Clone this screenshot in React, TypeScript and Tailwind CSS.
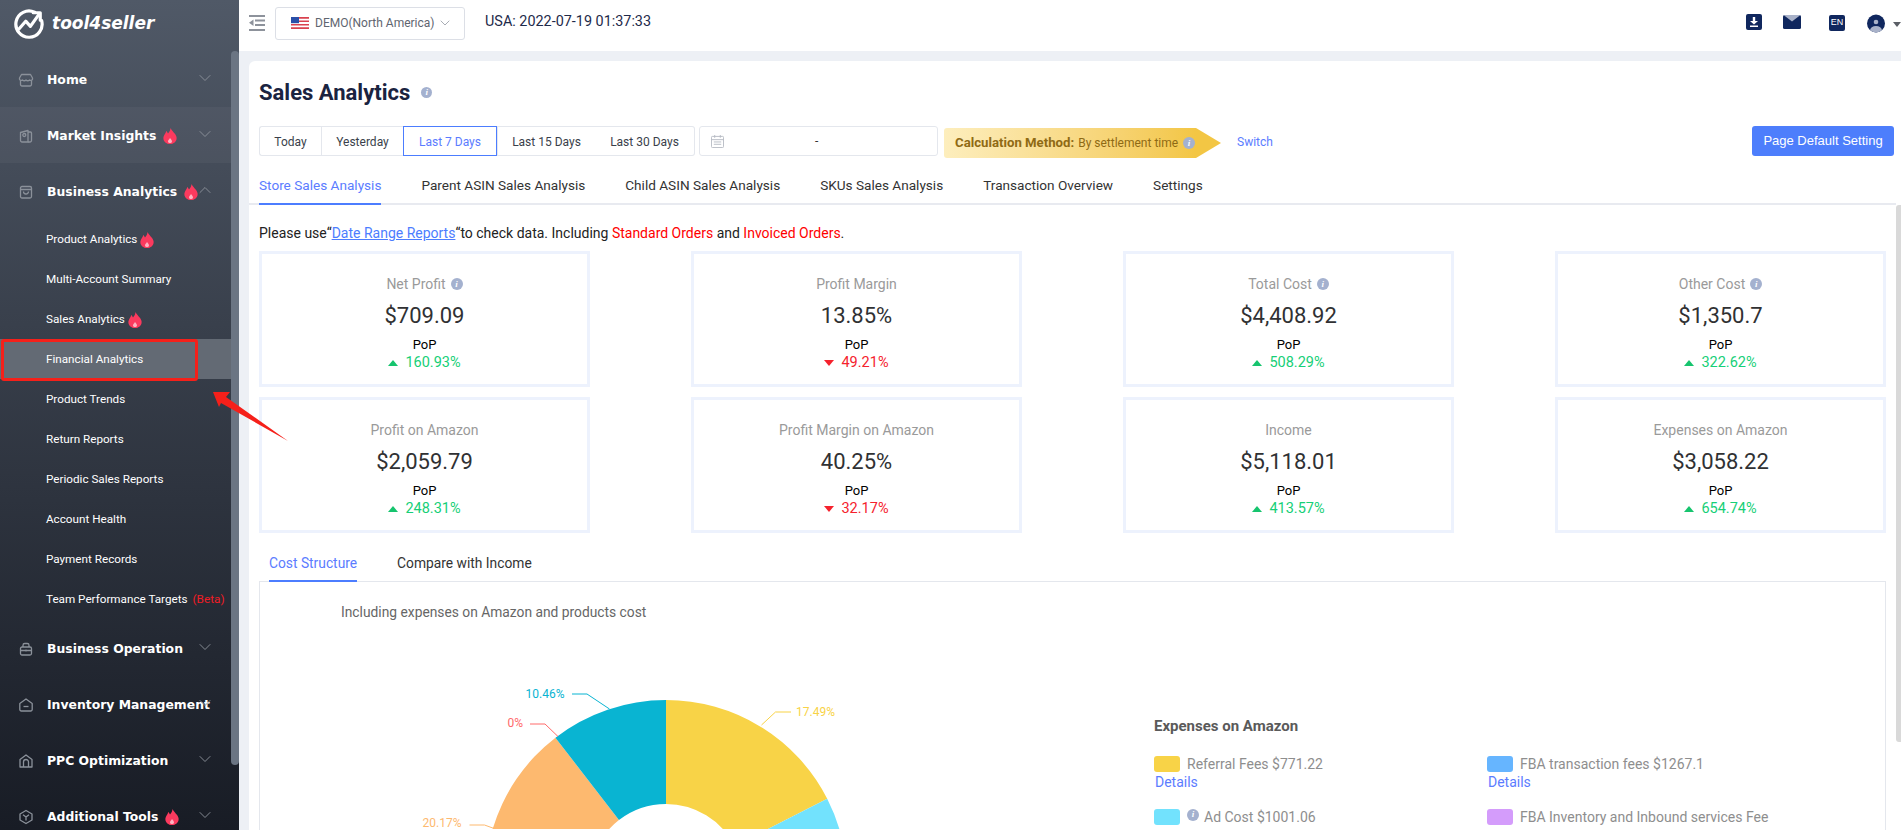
import React from "react";
import { ChevronDown, ChevronUp } from "lucide-react";

const Flame = ({ className = "" }: { className?: string }) => (
  <svg viewBox="0 0 14 16" className={`w-[14px] h-[16px] shrink-0 ${className}`}>
    <path d="M7.500 0C8.500 3 12.500 5 13.500 9C14.300 13 11 16 7 16C3 16 -.3 13 .5 9C1 6.800 2.800 5.500 3.200 3C4.400 4 5 5.500 5 5.500C6.400 4 7.400 2 7.500 0Z" fill="#fb3a5e" />
    <path d="M7 10C8 11.400 9.400 12.400 8.900 14C8.400 15.300 5.600 15.300 5.100 14C4.600 12.500 6 11.800 7 10Z" fill="#fdb4c2" />
  </svg>
);

const Info = ({ className = "" }: { className?: string }) => (
  <span className={`inline-flex items-center justify-center w-[12px] h-[12px] rounded-full bg-[#a4b1cf] text-white text-[9px] leading-none italic font-bold shrink-0 ${className}`} style={{ fontFamily: "'Liberation Serif', serif" }}>i</span>
);

const icons: Record<string, React.ReactNode> = {
  home: <><path d="M3.500 2.500h9l2 3.500v1.200a2 2 0 0 1-3 .8 2.400 2.400 0 0 1-3.500 0 2.400 2.400 0 0 1-3.500 0 2 2 0 0 1-3-.8V6z" /><path d="M2.500 8.500v4a1.500 1.500 0 0 0 1.500 1.500h8a1.500 1.500 0 0 0 1.500-1.500v-4" /></>,
  market: <><path d="M2.500 4.500 10 2.500v11.500H4a1.500 1.500 0 0 1-1.500-1.500z" /><path d="M10 4h2.500a1 1 0 0 1 1 1v7.500a1.500 1.500 0 0 1-1.500 1.500h-2" /><circle cx="6.300" cy="7" r="1.500" /></>,
  business: <><rect x="2.500" y="2.500" width="11" height="11.500" rx="1.500" /><path d="M2.500 5.500h11M5.500 7.500a2.500 2.500 0 0 0 5 0" /></>,
  operation: <><path d="M5 6V4.200A1.700 1.700 0 0 1 6.700 2.500h2.600A1.700 1.700 0 0 1 11 4.200V6" /><rect x="2.500" y="6" width="11" height="8" rx="1.500" /><path d="M2.500 9.500h11M8 8.500v2" /></>,
  inventory: <><path d="M1.800 6.500 8 2l6.200 4.500v6A1.500 1.500 0 0 1 12.700 14H3.300a1.500 1.500 0 0 1-1.500-1.500z" /><path d="M5.500 9.500h5" /></>,
  ppc: <><path d="M2 6.500 8 2l6 4.500V14H2z" /><path d="M5.500 14V9a2.500 2.500 0 0 1 5 0v5" /></>,
  tools: <><path d="M8 1.500 14 5v6l-6 3.500L2 11V5z" /><path d="M5 5.700l3 2.300 3-2.300M8 8v3.500" /></>,
};

const NavIcon = ({ name }: { name: string }) => (
  <svg viewBox="0 0 16 16" className="w-[16px] h-[16px] shrink-0 mr-[13px]" fill="none" stroke="#8b919a" strokeWidth="1.300" strokeLinejoin="round">
    {icons[name]}
  </svg>
);

const NavHead = ({ label, icon, flame, open, lit }: { label: string; icon: string; flame?: boolean; open?: boolean; lit?: boolean }) => (
  <div className={`relative h-[56px] flex items-center pl-[18px] pt-[2px] ${lit ? "bg-white/[0.04]" : ""}`}>
    <NavIcon name={icon} />
    <span className="text-white font-bold text-[12.400px] whitespace-nowrap" style={{ fontFamily: "'DejaVu Sans', sans-serif" }}>{label}</span>
    {flame && <Flame className="ml-[7px]" />}
    {open
      ? <ChevronUp size={20} strokeWidth={1.100} className="absolute right-[24px] top-[17px] text-[#8d939b]" />
      : <ChevronDown size={20} strokeWidth={1.100} className="absolute right-[24px] top-[17px] text-[#8d939b]" />}
  </div>
);

const Sub = ({ label, flame, active, children, tall }: { label: string; flame?: boolean; active?: boolean; children?: React.ReactNode; tall?: boolean }) => (
  <div className={`${tall ? "h-[41px]" : "h-[40px]"} flex items-center pl-[46px] pt-[1px] ${active ? "bg-[#636a74]" : ""}`}>
    <span className="text-white text-[11.700px] whitespace-nowrap">{label}</span>
    {flame && <Flame className="ml-[3px]" />}
    {children}
  </div>
);

const Sidebar = () => (
  <aside className="w-[239px] shrink-0 h-full overflow-hidden relative bg-gradient-to-b from-[#505967] to-[#181c25]">
    <div className="h-[51px] flex items-center pl-[14px] pb-[3px]">
      <svg viewBox="0 0 32 32" className="w-[30px] h-[30px] mr-[8px] shrink-0" fill="none" stroke="#fff" strokeWidth="3.400" strokeLinecap="round" strokeLinejoin="round">
        <path d="M22 3.500A14 14 0 1 0 29.500 12.500" />
        <path d="M5.500 21 12.500 13l5 5.500L26 6.500" />
        <path d="M20.500 4h7.500V12" />
      </svg>
      <span className="text-white font-bold italic text-[17px]" style={{ fontFamily: "'DejaVu Sans', sans-serif" }}>tool4seller</span>
    </div>
    <NavHead label="Home" icon="home" />
    <NavHead label="Market Insights" icon="market" flame lit />
    <NavHead label="Business Analytics" icon="business" flame open />
    <Sub label="Product Analytics" flame />
    <Sub label="Multi-Account Summary" />
    <Sub label="Sales Analytics" flame />
    <Sub label="Financial Analytics" active />
    <Sub label="Product Trends" />
    <Sub label="Return Reports" />
    <Sub label="Periodic Sales Reports" />
    <Sub label="Account Health" />
    <Sub label="Payment Records" />
    <Sub label="Team Performance Targets" tall>
      <span className="text-[#ef1c25] text-[11.800px] ml-[5px] whitespace-nowrap">(Beta)</span>
    </Sub>
    <NavHead label="Business Operation" icon="operation" />
    <NavHead label="Inventory Management" icon="inventory" />
    <NavHead label="PPC Optimization" icon="ppc" />
    <NavHead label="Additional Tools" icon="tools" flame />
    <div className="absolute left-[231px] top-[51px] w-[8px] h-[714px] rounded-[4px] bg-[#6b7583]" />
  </aside>
);

const Header = () => (
  <header className="h-[51px] shrink-0 bg-white flex items-center pl-[10px]">
    <svg viewBox="0 0 16 16" className="w-[16px] h-[16px] mr-[10px] mb-[6px]" fill="#8d929b">
      <rect x="0" y="0" width="16" height="2" /><rect x="6" y="4.500" width="10" height="2" /><rect x="6" y="9" width="10" height="2" /><rect x="0" y="14" width="16" height="2" /><path d="M4.500 4.500v6.500L0 7.800z" />
    </svg>
    <div className="w-[190px] h-[33px] border border-[#dcdfe6] rounded-[3px] flex items-center pl-[15px] mb-[5px]">
      <svg viewBox="0 0 18 12" className="w-[18px] h-[12px] mr-[6px]">
        <rect width="18" height="12" fill="#fff" />
        <path d="M0 0h18v1.700H0zM0 3.400h18v1.700H0zM0 6.900h18v1.700H0zM0 10.300h18V12H0z" fill="#d9424f" />
        <rect width="8" height="6.200" fill="#2a4fa8" />
      </svg>
      <span className="text-[12px] text-[#5f6570] whitespace-nowrap">DEMO(North America)</span>
      <ChevronDown size={16} strokeWidth={1} className="text-[#7d8390] ml-[2px]" />
    </div>
    <span className="ml-[20px] mb-[8px] text-[14.400px] text-[#1e2a4a] whitespace-nowrap">USA: 2022-07-19 01:37:33</span>
    <span className="flex-1" />
    <span className="w-[16px] h-[16px] rounded-[2px] bg-[#10275e] mb-[7px] flex items-center justify-center">
      <svg viewBox="0 0 16 16" className="w-[16px] h-[16px]" fill="#fff"><path d="M6.800 3h2.400v4H12L8 10.500 4 7h2.800zM4 11.500h8V13H4z" /></svg>
    </span>
    <svg viewBox="0 0 18 14" className="w-[18px] h-[14px] ml-[21px] mb-[7px]"><rect width="18" height="14" rx="1.500" fill="#10275e" /><path d="M.5 0h17L9 6.500z" fill="#a9b2c9" /></svg>
    <span className="w-[16px] h-[16px] rounded-[2px] bg-[#10275e] ml-[28px] mb-[5px] text-white text-[9px] flex items-center justify-center" style={{ fontFamily: "'Liberation Sans', sans-serif" }}>EN</span>
    <svg viewBox="0 0 18 19" className="w-[18px] h-[19px] ml-[22px] mb-[5px]">
      <clipPath id="av"><circle cx="9" cy="9.500" r="9" /></clipPath>
      <g clipPath="url(#av)"><rect width="18" height="19" fill="#10275e" /><circle cx="9" cy="8" r="2.300" fill="#a9b2c9" /><ellipse cx="9" cy="16.500" rx="6" ry="4.500" fill="#a9b2c9" /></g>
    </svg>
    <span className="w-0 h-0 ml-[8px] mb-[3px] border-x-[4px] border-x-transparent border-t-[5px] border-t-[#5b5f66]" />
  </header>
);

const ranges = ["Today", "Yesterday", "Last 7 Days", "Last 15 Days", "Last 30 Days"];
const rangeW = ["w-[62px]", "w-[82px]", "w-[94px]", "w-[98px]", "w-[100px]"];

const Toolbar = () => (
  <div className="h-[30px] flex items-start">
    <div className="flex h-[30px] w-[436px] text-[12px] text-[#3a3f4b]">
      {ranges.map((r, i) => (
        <div key={r} className={`${rangeW[i]} pt-[1px] flex items-center justify-center border-y border-[#e4e7ed] ${i === 0 ? "border-l rounded-l-[3px]" : ""} ${i === 4 ? "border-r rounded-r-[3px]" : ""} ${i === 1 || i === 3 ? "border-l" : ""} ${i === 2 ? "border !border-[#4c7dff] text-[#5b7cff]" : ""}`}>{r}</div>
      ))}
    </div>
    <div className="ml-[4px] w-[239px] h-[30px] border border-[#e4e7ed] rounded-[3px] flex items-center pl-[11px]">
      <svg viewBox="0 0 14 14" className="w-[13px] h-[13px] mr-[91px]" fill="none" stroke="#b6bac2" strokeWidth="1">
        <rect x=".5" y="1.500" width="13" height="12" rx="1" /><path d="M.5 5h13M4 0v3M10 0v3M3 7.500h8M3 10h8" />
      </svg>
      <span className="text-[12px] text-[#333]">-</span>
    </div>
    <div className="ml-[6px] h-[30px] mt-[2px] flex items-center">
      <div className="w-[252px] h-[30px] rounded-l-[3px] bg-gradient-to-r from-[#fdeebd] to-[#f3c644] flex items-center pl-[11px] text-[12px] text-[#8f6a14] whitespace-nowrap">
        <span className="font-bold text-[13.200px] mr-[4px]">Calculation Method:</span>
        <span>By settlement time</span>
        <Info className="ml-[5px]" />
      </div>
      <span className="w-0 h-0 border-y-[15px] border-y-transparent border-l-[25px] border-l-[#f3c644]" />
    </div>
    <a className="ml-[16px] mt-[7px] text-[12px] text-[#5b7cff]">Switch</a>
    <span className="flex-1" />
    <button className="w-[142px] h-[30px] rounded-[3px] bg-[#4d7efc] text-white text-[13px] -mr-[8px]" style={{ fontFamily: "'Liberation Sans', sans-serif" }}>Page Default Setting</button>
  </div>
);

const mainTabs = ["Store Sales Analysis", "Parent ASIN Sales Analysis", "Child ASIN Sales Analysis", "SKUs Sales Analysis", "Transaction Overview", "Settings"];

const MainTabs = () => (
  <div className="h-[49px] -ml-[10px] pl-[10px] -mr-[10px] border-b-[2px] border-[#e8eaf0] flex gap-[40px] text-[13.600px] text-[#333]">
    {mainTabs.map((t, i) => (
      <div key={t} className={`h-[49px] pt-[19px] leading-[20px] whitespace-nowrap ${i === 0 ? "text-[#5b7cff] border-b-[2px] border-[#4c7dff]" : ""}`}>{t}</div>
    ))}
  </div>
);

type Metric = { t: string; v: string; p: string; up: boolean; info?: boolean };
const metrics: Metric[][] = [
  [
    { t: "Net Profit", v: "$709.09", p: "160.93%", up: true, info: true },
    { t: "Profit Margin", v: "13.85%", p: "49.21%", up: false },
    { t: "Total Cost", v: "$4,408.92", p: "508.29%", up: true, info: true },
    { t: "Other Cost", v: "$1,350.7", p: "322.62%", up: true, info: true },
  ],
  [
    { t: "Profit on Amazon", v: "$2,059.79", p: "248.31%", up: true },
    { t: "Profit Margin on Amazon", v: "40.25%", p: "32.17%", up: false },
    { t: "Income", v: "$5,118.01", p: "413.57%", up: true },
    { t: "Expenses on Amazon", v: "$3,058.22", p: "654.74%", up: true },
  ],
];

const Card = ({ m }: { m: Metric }) => (
  <div className="w-[331px] h-[136px] border-[3px] border-[#edf2fd] flex flex-col items-center pt-[20px]">
    <div className="h-[20px] flex items-center text-[14px] text-[#9a9a9a] whitespace-nowrap">
      {m.t}
      {m.info && <Info className="ml-[5px]" />}
    </div>
    <div className="h-[32px] mt-[6px] flex items-center text-[22px] text-[#303133] leading-none">{m.v}</div>
    <div className="h-[16px] mt-[5px] flex items-center text-[13px] text-black">PoP</div>
    <div className={`h-[17px] mt-[1px] flex items-center text-[14.500px] ${m.up ? "text-[#16cf77]" : "text-[#f5222d]"}`}>
      <span className={`w-0 h-0 mr-[7px] border-x-[5.500px] border-x-transparent ${m.up ? "border-b-[6px] border-b-[#16c46e]" : "border-t-[6px] border-t-[#f5222d]"}`} />
      {m.p}
    </div>
  </div>
);

const polar = (r: number, deg: number) => {
  const a = ((deg - 90) * Math.PI) / 180;
  return [r * Math.cos(a), r * Math.sin(a)];
};
const seg = (a0: number, a1: number, R = 181, r = 77) => {
  const [x0, y0] = polar(R, a0);
  const [x1, y1] = polar(R, a1);
  const [x2, y2] = polar(r, a1);
  const [x3, y3] = polar(r, a0);
  return `M${x0} ${y0}A${R} ${R} 0 0 1 ${x1} ${y1}L${x2} ${y2}A${r} ${r} 0 0 0 ${x3} ${y3}Z`;
};

const Pie = () => (
  <svg width="620" height="150" viewBox="0 0 620 150" className="block shrink-0">
    <g transform="translate(406 202)" >
      <path d={seg(0, 62.960)} fill="#f8d347" />
      <path d={seg(62.960, 120)} fill="#72e2fd" />
      <path d={seg(-110, -37.650)} fill="#fdb96f" />
      <path d={seg(-37.650, 0)} fill="#09b4d2" />
    </g>
    <g fill="none" strokeWidth="1">
      <path d="M312 15h15l22.500 15" stroke="#09b4d2" />
      <path d="M270 45h15l13 12.500" stroke="#ff6a6a" />
      <path d="M531 33h-15.500l-14 13" stroke="#f8d347" />
      <path d="M209.500 146h15l11 4" stroke="#fdb96f" />
    </g>
    <g fontSize="12" style={{ fontFamily: "Roboto, sans-serif" }}>
      <text x="265.500" y="19" fill="#09b4d2">10.46%</text>
      <text x="247.500" y="48" fill="#ff6a6a">0%</text>
      <text x="536" y="37" fill="#f8d347">17.49%</text>
      <text x="162.500" y="148" fill="#fdb96f">20.17%</text>
    </g>
  </svg>
);

const Swatch = ({ c }: { c: string }) => <span className="w-[26px] h-[16px] rounded-[3px] shrink-0 mr-[7px]" style={{ background: c }} />;

const Legend = () => (
  <div className="absolute left-[894px] top-[135px] w-[640px] text-[14px] text-[#8e8e8e] whitespace-nowrap">
    <div className="font-bold text-[15px] text-[#5a5a5a] leading-[18px]">Expenses on Amazon</div>
    <div className="grid grid-cols-[333px_1fr] mt-[21px]">
      <div className="h-[53px]">
        <div className="flex items-center h-[16px]"><Swatch c="#f8d347" />Referral Fees $771.22</div>
        <div className="text-[#5b7cff] h-[16px] mt-[2px] ml-[1px] leading-[16px]">Details</div>
      </div>
      <div>
        <div className="flex items-center h-[16px]"><Swatch c="#66b5ff" />FBA transaction fees $1267.1</div>
        <div className="text-[#5b7cff] h-[16px] mt-[2px] ml-[1px] leading-[16px]">Details</div>
      </div>
      <div className="flex items-center h-[16px]"><Swatch c="#72e2fd" /><Info className="mr-[5px] -mt-[5px]" />Ad Cost $1001.06</div>
      <div className="flex items-center h-[16px]"><Swatch c="#d49cfb" />FBA Inventory and Inbound services Fee</div>
    </div>
  </div>
);

const App = () => (
  <div className="w-[1901px] h-[830px] overflow-hidden flex relative bg-[#edf0f5]" style={{ fontFamily: "Roboto, 'Noto Sans', sans-serif" }}>
    <Sidebar />
    <main className="flex-1 min-w-0 flex flex-col">
      <Header />
      <div className="flex-1 min-h-0 pl-[10px] pt-[10px]">
        <div className="relative h-full bg-white rounded-tl-[6px] pl-[10px] pr-[15px] overflow-hidden">
          <h1 className="h-[65px] flex items-center pb-[2px] text-[#1a2340] font-bold text-[22px] whitespace-nowrap">
            Sales Analytics
            <Info className="ml-[11px] !w-[11px] !h-[11px]" />
          </h1>
          <Toolbar />
          <MainTabs />
          <p className="h-[46px] pt-[18px] leading-[20px] text-[14px] text-[#222] whitespace-nowrap">
            Please use“<a className="text-[#4c7dff] underline">Date Range Reports</a>“to check data. Including <span className="text-[#f00]">Standard Orders</span> and <span className="text-[#f00]">Invoiced Orders</span>.
          </p>
          <div className="flex flex-col gap-[10px]">
            {metrics.map((row, i) => (
              <div key={i} className="flex justify-between">
                {row.map((m) => <Card key={m.t} m={m} />)}
              </div>
            ))}
          </div>
          <div className="h-[49px] pl-[10px] flex gap-[40px] text-[13.800px] text-[#333]">
            <div className="h-[49px] pt-[20px] leading-[20px] text-[#5b7cff] border-b-[2px] border-[#4c7dff] relative z-10">Cost Structure</div>
            <div className="pt-[20px] leading-[20px]">Compare with Income</div>
          </div>
          <div className="relative -mt-px h-[300px] border border-[#e4e7ed] pl-[81px] pt-[20px]">
            <div className="text-[13.800px] leading-[20px] text-[#666] whitespace-nowrap">Including expenses on Amazon and products cost</div>
            <div className="absolute left-0 top-0 pt-[97px]">
              <Pie />
            </div>
            <Legend />
          </div>
          <div className="absolute right-0 top-[144px] w-[5px] h-[537px] rounded-l-[3px] bg-[#d9d9d9]" />
        </div>
      </div>
    </main>
    <div className="absolute left-[1px] top-[339px] w-[197px] h-[42px] border-[3px] border-[#f5201a] rounded-[3px]" />
    <svg className="absolute left-[206px] top-[386px]" width="90" height="60" viewBox="0 0 90 60">
      <path d="M7 6 24 6 20 11 82 55 15 17 13 21Z" fill="#f5201a" />
    </svg>
  </div>
);

export default App;
